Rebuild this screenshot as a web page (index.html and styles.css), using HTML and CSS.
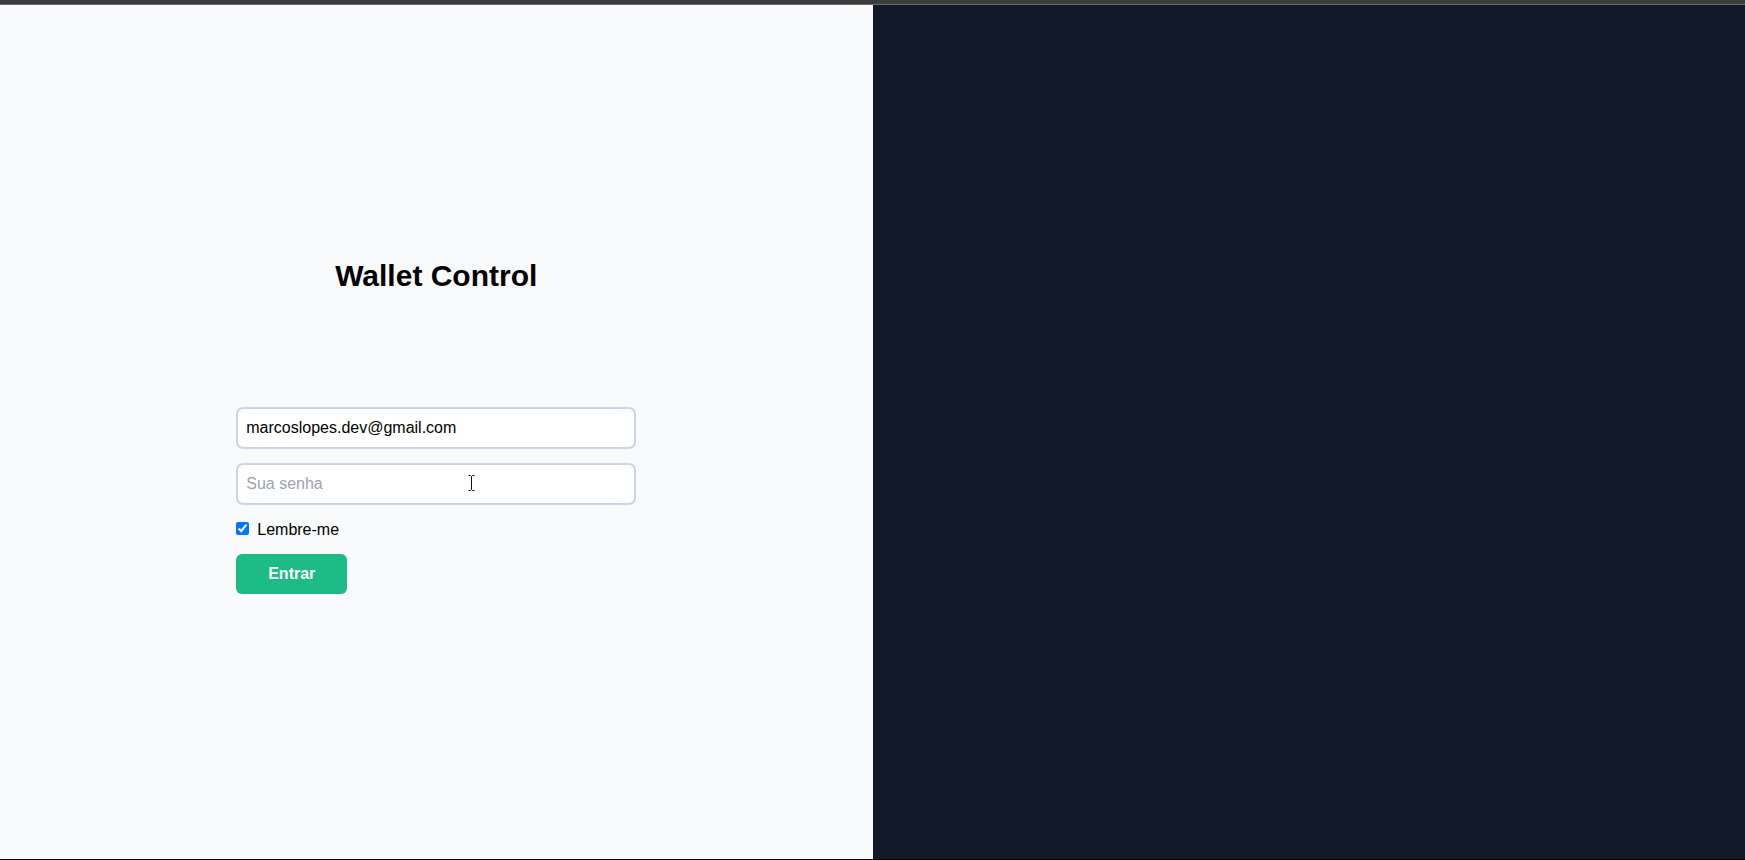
FILE: index.html
```html
<!DOCTYPE html>
<html lang="pt-BR">
<head>
<meta charset="utf-8">
<title>Wallet Control</title>
<link rel="stylesheet" href="styles.css">
</head>
<body>
<div class="chrome-top"></div>
<main class="split">
  <section class="left">
    <h1 class="title">Wallet Control</h1>
    <form class="login">
      <input class="field" type="email" value="marcoslopes.dev@gmail.com">
      <div class="field-wrap">
        <input class="field" type="password" placeholder="Sua senha">
        <svg class="cursor" width="9" height="18" viewBox="0 0 9 18" aria-hidden="true">
          <path d="M1.5 1.5h2l1 1 1-1h2M4.5 2.5v13M1.5 16.5h2l1-1 1 1h2" fill="none" stroke="#fff" stroke-width="2.4"/>
          <path d="M1.5 1.5h2l1 1 1-1h2M4.5 2.5v13M1.5 16.5h2l1-1 1 1h2" fill="none" stroke="#111" stroke-width="1"/>
        </svg>
      </div>
      <label class="remember"><input class="check" type="checkbox" checked><span>Lembre-me</span></label>
      <button class="btn" type="button">Entrar</button>
    </form>
  </section>
  <section class="right"></section>
</main>
<div class="chrome-bottom"></div>
</body>
</html>
```

FILE: styles.css
```css
* { box-sizing: border-box; }
html, body { margin: 0; padding: 0; }
body {
  width: 1745px;
  height: 860px;
  overflow: hidden;
  font-family: "Liberation Sans", Arial, sans-serif;
  background: #111827;
  display: flex;
  flex-direction: column;
}
.chrome-top {
  height: 5px;
  flex: none;
  background: #3c3c3c;
  border-bottom: 1px solid #6a6a6a;
}
.chrome-bottom {
  height: 1px;
  flex: none;
  background: #000;
}
.split {
  flex: 1;
  display: grid;
  grid-template-columns: 1fr 1fr;
}
.left {
  background: #f8fafc;
  display: flex;
  flex-direction: column;
  align-items: center;
  padding-top: 253px;
}
.right {
  background: #111827;
}
.title {
  margin: 0;
  font-size: 30px;
  line-height: 36px;
  font-weight: 700;
  color: #000;
}
.login {
  width: 400px;
  margin-top: 113px;
  display: flex;
  flex-direction: column;
  align-items: flex-start;
}
.field-wrap {
  position: relative;
  width: 100%;
  margin-top: 14px;
}
.field {
  width: 100%;
  height: 42px;
  border: 2px solid #cbd5e1;
  border-radius: 7px;
  background: #fff;
  padding: 0 8px;
  font-family: "Liberation Sans", Arial, sans-serif;
  font-size: 16px;
  color: #000;
  outline: none;
  display: block;
}
.field::placeholder { color: #9ca3af; }
.cursor {
  position: absolute;
  left: 231px;
  top: 11px;
}
.remember {
  margin-top: 13px;
  display: flex;
  align-items: flex-start;
  gap: 8px;
  font-size: 16px;
  line-height: 24px;
  color: #000;
}
.check {
  width: 13px;
  height: 13px;
  margin: 4px 0 0 0;
  accent-color: #0075ff;
}
.btn {
  margin-top: 12px;
  width: 111px;
  height: 40px;
  border: none;
  border-radius: 6px;
  background: #1dbb85;
  color: #fff;
  font-family: "Liberation Sans", Arial, sans-serif;
  font-size: 16px;
  font-weight: 700;
  padding: 0;
}
```
